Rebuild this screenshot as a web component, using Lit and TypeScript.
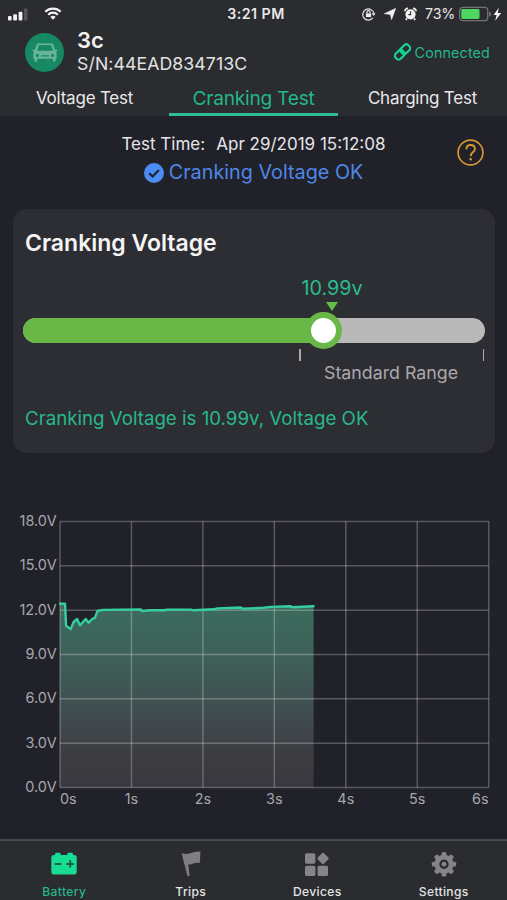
import { LitElement, html, css, svg } from "lit";
import { customElement, property } from "lit/decorators.js";
import { classMap } from "lit/directives/class-map.js";

const FONT = css`Inter, "Liberation Sans", sans-serif`;

@customElement("status-bar")
class StatusBar extends LitElement {
  static styles = css`
    :host { display: grid; grid-template-columns: 1fr auto 1fr; height: 26px; align-items: center; color: #e9e9ea; font: 500 13.4px/26px ${FONT}; }
    .left { display: flex; align-items: center; gap: 16px; padding-left: 8px; }
    .right { display: flex; align-items: center; justify-content: flex-end; padding-right: 4px; gap: 8px; }
    .time { font-size: 14.2px; font-weight: 600; letter-spacing: 0.5px; padding: 1px 0 0 5px; }
    .pct { font-size: 14.2px; font-weight: 400; letter-spacing: -0.2px; margin-right: -4px; }
    svg { display: block; }
  `;
  render() {
    return html`
      <div class="left">
        <svg width="20" height="14" viewBox="0 0 20 14" fill="#f2f2f2">
          <rect x="0" y="9" width="3.6" height="4.6" rx="1"/><rect x="5.2" y="7.2" width="3.8" height="6.4" rx="1"/>
          <rect x="10.6" y="4.8" width="3.8" height="8.8" rx="1"/><rect x="16" y="1.4" width="3.4" height="12.2" rx="1" fill="#55565a"/>
        </svg>
        <svg width="18" height="14" viewBox="0 0 18 14" fill="none" stroke="#f2f2f2" stroke-width="2.2">
          <path d="M1.3 4.8a11 11 0 0 1 15.4 0"/><path d="M4.2 7.7a6.8 6.8 0 0 1 9.6 0"/>
          <path d="M6.3 10a3.8 3.8 0 0 1 5.4 0L9 12.7z" fill="#f2f2f2" stroke="none"/>
        </svg>
      </div>
      <div class="time">3:21 PM</div>
      <div class="right">
        <svg width="15" height="14" viewBox="0 0 15 14" fill="none" stroke="#e9e9ea" stroke-width="1.2">
          <path d="M13 10.9A5.6 5.6 0 1 1 14 6.2" transform="translate(-1.2 0)"/><path d="M10.6 6.3h4l-2 2.6z" fill="#e9e9ea" stroke="none"/>
          <rect x="4.9" y="6.3" width="5.2" height="3.8" fill="#e9e9ea" stroke="none"/><path d="M5.900 6.500V5.200a1.600 1.600 0 0 1 3.200 0v1.300"/>
        </svg>
        <svg width="12" height="14" viewBox="0 0 12 14"><path d="M11.8 1.2 7.6 12.8 6.3 7.5.1 6.7z" fill="#f2f2f2" stroke="#f2f2f2" stroke-width=".4"/></svg>
        <svg width="13" height="14" viewBox="0 0 13 14">
          <circle cx="6.5" cy="7.3" r="5.1" fill="#f2f2f2"/><path d="M.9 4.2A3 3 0 0 1 4 1.3M12.1 4.2A3 3 0 0 0 9 1.3M3 11.4l-1.2 1.5M10 11.4l1.2 1.5" stroke="#f2f2f2" stroke-width="1.7" fill="none"/>
          <path d="M6.6 4.2v3.4H4.3" stroke="#2b2c2f" stroke-width="1.1" fill="none"/>
        </svg>
        <span class="pct">73%</span>
        <svg width="44" height="16" viewBox="0 0 44 16">
          <rect x=".7" y="1.3" width="28" height="13.4" rx="3" fill="none" stroke="#717276" stroke-width="1.3"/>
          <path d="M30 5.4c2.8.8 2.8 4.4 0 5.2z" fill="#717276"/>
          <rect x="2.3" y="3" width="18.2" height="10" rx="1.4" fill="#4cd75f"/>
          <path d="M39.8 1.8 34.6 9h3l-1.4 5.8L42.2 7h-3.4z" fill="#f2f2f2"/>
        </svg>
      </div>`;
  }
}

@customElement("device-header")
class DeviceHeader extends LitElement {
  static styles = css`
    :host { display: flex; align-items: center; height: 52px; padding: 0 17px 0 25px; font-family: ${FONT}; color: #f1f1f2; }
    svg { display: block; flex: none; }
    .names { margin-left: 13px; flex: 1; margin-top: -2px; }
    .name { font-size: 22px; font-weight: 600; line-height: 25px; }
    .serial { font-size: 17.7px; line-height: 21px; letter-spacing: 0.08px; color: #e2e2e4; white-space: nowrap; }
    .link { display: flex; align-items: center; gap: 4px; color: #22b688; font-size: 14.3px; letter-spacing: 0.15px; }
  `;
  render() {
    return html`
      <svg width="39" height="39" viewBox="0 0 39 39">
        <circle cx="19.5" cy="19.5" r="19.5" fill="#168862"/>
        <path fill="#68b59b" fill-rule="evenodd" d="M13.4 10.4h13.2c.9 0 1.4.4 1.7 1.2l1.8 5.2 2.1-.4.2 1.7-1.6.7c.6.7.8 1.3.8 2.2v4.800h-1v2.700h-2.800v-2.700H12.200v2.700H9.400v-2.700h-1V21c0-.9.200-1.500.8-2.200l-1.600-.7.200-1.700 2.100.4 1.800-5.200c.3-.8.8-1.200 1.700-1.200zm.6 1.600-2 5.800h16l-2-5.800zM12.400 20.800a1.600 1.600 0 1 0 0 3.200 1.600 1.600 0 0 0 0-3.200zm15.200 0a1.600 1.600 0 1 0 0 3.200 1.600 1.600 0 0 0 0-3.200zM16 22.200v1.300h8v-1.300z"/>
      </svg>
      <div class="names"><div class="name">3c</div><div class="serial">S/N:44EAD834713C</div></div>
      <div class="link">
        <svg width="17" height="18" viewBox="0 0 17 18" fill="none" stroke="#14d596" stroke-width="2.1">
          <g transform="rotate(-45 8.5 9)"><rect x="-0.4" y="5.5" width="10" height="7" rx="2.8"/><rect x="7.400" y="5.5" width="10" height="7" rx="2.8"/></g>
        </svg>
        <span>Connected</span>
      </div>`;
  }
}

@customElement("test-tabs")
class TestTabs extends LitElement {
  static styles = css`
    :host { display: grid; grid-template-columns: repeat(3, 1fr); height: 38px; font-family: ${FONT}; }
    .tab { display: flex; align-items: center; justify-content: center; box-sizing: border-box; color: #e8e8ea; font-size: 17px; letter-spacing: -0.22px; border-bottom: 3px solid transparent; padding-top: 5px; }
    .active { color: #22b688; font-size: 19.2px; letter-spacing: -0.27px; border-bottom-color: #2ebd90; }
  `;
  render() {
    return ["Voltage Test", "Cranking Test", "Charging Test"].map(
      (t, i) => html`<div class=${classMap({ tab: true, active: i === 1 })}><span>${t}</span></div>`
    );
  }
}

@customElement("range-card")
class RangeCard extends LitElement {
  @property({ type: Number }) fill = 300.5;
  static styles = css`
    :host { display: block; box-sizing: border-box; height: 244px; margin: 0 12px 0 13px; padding: 20px 10px 0; border-radius: 14px; background: #2d2e33; font-family: ${FONT}; }
    .title { margin-left: 2px; font-size: 23px; line-height: 28px; font-weight: 600; color: #f4f4f5; }
    .reading { margin-top: 18px; width: 618px; text-align: center; font-size: 19.8px; line-height: 26px; color: #29bc8e; }
    .arrow { display: block; margin: 1px 0 0 303px; }
    .track { position: relative; height: 25px; margin-top: 6.5px; border-radius: 13px; background: #b9b9b9; }
    .bar { height: 100%; border-radius: 13px; background: #69b847; }
    .knob { position: absolute; top: -6px; box-sizing: border-box; width: 37px; height: 37px; margin-left: -18.5px; border: 6.5px solid #69b847; border-radius: 50%; background: #fff; }
    .ticks { display: flex; justify-content: space-between; margin: 6px 1px 0 276px; }
    .tick { width: 1.5px; height: 12.5px; background: #aaaaad; }
    .range { margin-left: 301px; font-size: 17.8px; line-height: 24px; color: #a9a9ad; white-space: nowrap; }
    .result { margin: 21px 0 0 2px; font-size: 18.7px; line-height: 26px; color: #29b88b; white-space: nowrap; }
  `;
  render() {
    return html`
      <div class="title">Cranking Voltage</div>
      <div class="reading">10.99v</div>
      <svg class="arrow" width="12" height="9" viewBox="0 0 12 9"><path d="M0 0h12L6 9z" fill="#5fc044"/></svg>
      <div class="track">
        <div class="bar" style="width:${this.fill}px"></div>
        <div class="knob" style="left:${this.fill}px"></div>
      </div>
      <div class="ticks"><div class="tick"></div><div class="tick"></div></div>
      <div class="range">Standard Range</div>
      <div class="result">Cranking Voltage is 10.99v, Voltage OK</div>`;
  }
}

const SAMPLES: [number, number][] = [
  [0, 12.43], [0.07, 12.43], [0.085, 10.95], [0.15, 10.72], [0.19, 11.2], [0.24, 11.4], [0.28, 10.98], [0.36, 11.4],
  [0.4, 11.15], [0.45, 11.4], [0.49, 11.5], [0.525, 11.95], [0.6, 12.02], [1.13, 12.05], [1.15, 11.94], [1.25, 11.99], [1.45, 11.99],
  [1.5, 12.04], [1.83, 12.04], [1.87, 11.99], [2.15, 12.06], [2.2, 12.12], [2.53, 12.18], [2.56, 12.1], [2.85, 12.16],
  [2.95, 12.22], [3.22, 12.27], [3.25, 12.2], [3.55, 12.27],
];

@customElement("voltage-chart")
class VoltageChart extends LitElement {
  static styles = css`
    :host { display: block; height: 310px; }
    svg { display: block; }
    text { font: 400 14.4px ${FONT}; fill: #a7a7ac; }
    .grid { stroke: #fff; stroke-opacity: 0.25; stroke-width: 1.5; }
    .line { fill: none; stroke: #35cf9f; stroke-width: 2.4; stroke-linejoin: round; stroke-linecap: round; }
  `;
  render() {
    const left = 60, top = 21.5, w = 428.7, h = 266;
    const x = (s: number) => left + (s * w) / 6;
    const y = (v: number) => top + h - (v * h) / 18;
    const pts = SAMPLES.map(([s, v]) => `${x(s).toFixed(1)},${y(v).toFixed(1)}`).join(" ");
    const end = x(3.55);
    return html`<svg width="507" height="310" viewBox="0 0 507 310">
      <defs><linearGradient id="area" x1="0" y1="0" x2="0" y2="1">
        <stop offset="0" stop-color="#3b6c5d"/><stop offset=".35" stop-color="#3f5d57"/><stop offset=".7" stop-color="#40464c"/><stop offset=".82" stop-color="#3c3c40"/><stop offset="1" stop-color="#393840"/>
      </linearGradient></defs>
      <polygon points="${x(0)},${y(0)} ${pts} ${end},${y(0)}" fill="url(#area)"/>
      ${[0, 3, 6, 9, 12, 15, 18].map((v) => svg`<line class="grid" x1=${left} x2=${x(6)} y1=${y(v)} y2=${y(v)}/>
        <text x="56.7" y=${y(v) + 4.6} text-anchor="end">${v.toFixed(1)}V</text>`)}
      ${[0, 1, 2, 3, 4, 5, 6].map((s) => svg`<line class="grid" x1=${x(s)} x2=${x(s)} y1=${top} y2=${y(0)}/>
        <text x=${s === 0 ? 60 : s === 6 ? 488.5 : x(s)} y="304" text-anchor=${s === 0 ? "start" : s === 6 ? "end" : "middle"}>${s}s</text>`)}
      <polyline class="line" points=${pts}/>
    </svg>`;
  }
}

const gearTeeth = Array.from({ length: 8 }, (_, i) => i * 45);
const NAV = [
  { label: "Battery", icon: svg`<g fill="#16dc94"><rect x="1.3" y="3" width="25.4" height="19.4" rx="2.6"/><rect x="5" y=".8" width="5.6" height="5" rx="1.4"/><rect x="17.4" y=".8" width="5.6" height="5" rx="1.4"/></g><path d="M4.6 11.9h6.6M16.4 11.9H24M20.2 8.2v7.4" stroke="#1d5d4a" stroke-width="2" fill="none"/>` },
  { label: "Trips", icon: svg`<path fill="#7f7f83" d="M4.6 1.2q4.7 1.5 8.6.1 5-2 10.3-1.7L22.8 11q-4.5-.5-7 .8-2.5 1.2-4.6.4L12.6 23q-.4 1.8-2.2 1.1z"/>` },
  { label: "Devices", icon: svg`<g fill="#858588"><rect x="2" y="1.3" width="10.4" height="10.4" rx="1.6"/><rect x="2" y="13.7" width="10.4" height="10.4" rx="1.6"/><rect x="14.6" y="13.7" width="10.4" height="10.4" rx="1.6"/><rect x="15.6" y="2" width="8.8" height="8.8" rx="1.4" transform="rotate(45 20 6.4)"/></g>` },
  { label: "Settings", icon: svg`<g fill="#858588">${gearTeeth.map((a) => svg`<rect x="11.6" y="0" width="4.8" height="6" rx="1.5" transform="rotate(${a} 14 12.2)"/>`)}</g><circle cx="14" cy="12.2" r="7.1" fill="none" stroke="#858588" stroke-width="4.8"/><circle cx="14" cy="12.2" r="2.4" fill="#858588"/>` },
];

@customElement("nav-bar")
class NavBar extends LitElement {
  static styles = css`
    :host { display: grid; grid-template-columns: repeat(4, 1fr); box-sizing: border-box; height: 61px; border-top: 2px solid #47484c; background: #2b2c2f; font: 500 12.1px/16px ${FONT}; letter-spacing: 0.35px; color: #e4e4e6; padding-left: 1px; }
    .item { display: flex; flex-direction: column; align-items: center; padding-top: 10.5px; gap: 7.5px; }
    .active { color: #22b688; }
    svg { display: block; overflow: visible; }
  `;
  render() {
    return NAV.map((n, i) => html`<div class=${classMap({ item: true, active: i === 0 })}>
      <svg width="28" height="25" viewBox="0 0 28 25">${n.icon}</svg><span>${n.label}</span></div>`);
  }
}

@customElement("app-root")
class AppRoot extends LitElement {
  static styles = css`
    :host { display: flex; flex-direction: column; width: 507px; height: 900px; overflow: hidden; background: #21212a; font-family: ${FONT}; }
    .top { background: #2b2c2f; height: 116px; }
    .summary { display: grid; grid-template-columns: 1fr 27px; align-items: center; height: 93px; box-sizing: border-box; padding: 0 23px 20px 20px; }
    .lines { text-align: center; padding-left: 30px; padding-top: 14px; white-space: nowrap; }
    .when { font-size: 17px; line-height: 26px; color: #e5e5e8; }
    .colon { display: inline-block; width: 16px; text-align: left; }
    .verdict { display: flex; align-items: center; justify-content: center; gap: 5px; font-size: 19.8px; line-height: 31px; color: #4f87e6; }
    svg { display: block; }
    voltage-chart { margin-top: 47px; }
    nav-bar { margin-top: auto; }
  `;
  render() {
    return html`
      <div class="top"><status-bar></status-bar><device-header></device-header><test-tabs></test-tabs></div>
      <div class="summary">
        <div class="lines">
          <div class="when">Test Time<span class="colon">:</span>Apr 29/2019 15:12:08</div>
          <div class="verdict">
            <svg width="20" height="20" viewBox="0 0 20 20"><circle cx="10" cy="10" r="10" fill="#4e8cf5"/><path d="M5.2 10.2l3.4 3.3 6.3-6.6" fill="none" stroke="#21212a" stroke-width="2.1"/></svg>
            <span>Cranking Voltage OK</span>
          </div>
        </div>
        <svg width="27" height="27" viewBox="0 0 27 27" fill="none" stroke="#d8962f"><circle cx="13.5" cy="13.5" r="12.4" stroke-width="1.7"/><path d="M9.3 10.4C9.4 7.7 11 6 13.6 6s4.3 1.6 4.3 3.9c0 3.4-4.2 3.5-4.2 7.3" stroke-width="1.9"/><circle cx="13.7" cy="20.2" r="1.3" fill="#d8962f" stroke="none"/></svg>
      </div>
      <range-card></range-card>
      <voltage-chart></voltage-chart>
      <nav-bar></nav-bar>`;
  }
}
